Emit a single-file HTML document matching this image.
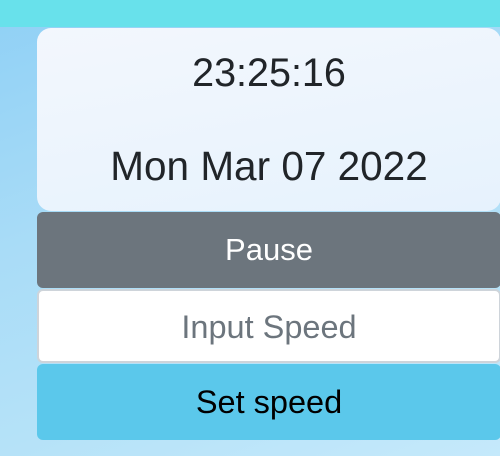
<!DOCTYPE html>
<html><head><style>
html,body{margin:0;padding:0;width:500px;height:456px;overflow:hidden;font-family:"Liberation Sans",sans-serif}
body{background:linear-gradient(160deg,#8fd0f5 0%,#a9dcf7 40%,#b5e2f8 70%,#c5e9fb 100%);position:relative}
.top{position:absolute;left:0;top:0;width:500px;height:27px;background:#68e1eb}
.card{position:absolute;left:37px;top:28px;width:464px;height:183px;border-radius:14px;background:linear-gradient(170deg,#f3f7fd,#e6f2fd);}
.t{position:absolute;left:0;width:100%;text-align:center;color:#212529}
.btn{position:absolute;left:37px;width:464px;border-radius:6px;text-align:center;font-size:31px}
</style></head><body>
<div class="top"></div>
<div class="card">
<div class="t" style="top:23px;font-size:39.5px">23:25:16</div>
<div class="t" style="top:115px;font-size:40.5px">Mon Mar 07 2022</div>
</div>
<div class="btn" style="top:212px;height:76px;line-height:76px;background:#6c757d;color:#fff">Pause</div>
<div class="btn" style="top:289px;height:70px;line-height:72px;background:#fff;border:2px solid #ced4da;width:460px;color:#6c757d;font-size:32.5px">Input Speed</div>
<div class="btn" style="top:364px;height:76px;line-height:76px;background:#5bc8eb;color:#000;font-size:32.5px">Set speed</div>
</body></html>
